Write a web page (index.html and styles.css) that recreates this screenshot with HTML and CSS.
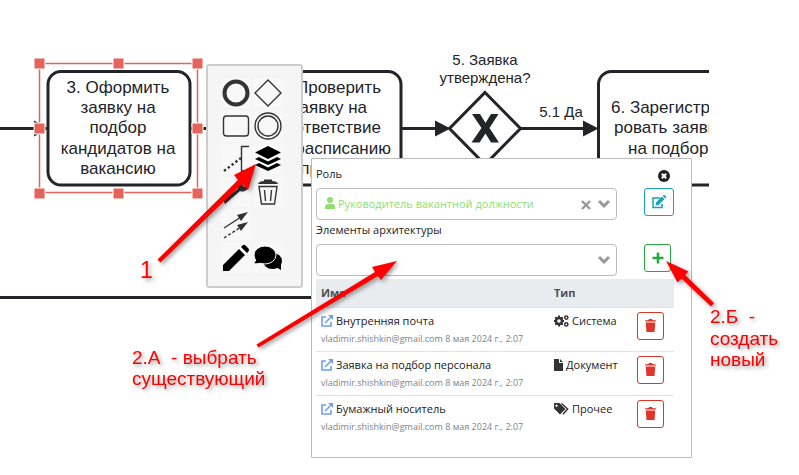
FILE: index.html
```html
<!DOCTYPE html>
<html lang="ru">
<head>
<meta charset="utf-8">
<title>Элементы архитектуры</title>
<link rel="stylesheet" href="styles.css">
</head>
<body>
<main class="canvas">
  <svg class="layer" width="709" height="475" viewBox="0 0 709 475" aria-label="Схема процесса">
    <g class="shape">
      <path d="M0 128.500H34M190 128.500H207M401 128.500H436M520 128.500H585M0 297.500H320"/>
      <rect x="48" y="71.500" width="142" height="113.500" rx="13"/>
      <rect x="259" y="71.500" width="142" height="113.500" rx="13"/>
      <rect x="598.500" y="71.500" width="142" height="113.500" rx="13"/>
      <path d="M485 92.500L520.500 128.500L485 164.500L449.500 128.500Z"/>
    </g>
    <g class="solid">
      <path d="M34 120.500L49 128.500L34 136.500ZM435 120.500L450.500 128.500L435 136.500ZM583 120.500L598.500 128.500L583 136.500Z"/>
      <path d="M472 114H480L485.500 123L491 114H498.500L489.500 128L499 142.500H491L485.500 133.500L479.500 142.500H471.500L481.500 128Z"/>
    </g>
    <g class="caption">
      <text x="118" y="93">3. Оформить</text>
      <text x="118" y="113">заявку на</text>
      <text x="118" y="133">подбор</text>
      <text x="118" y="154">кандидатов на</text>
      <text x="118" y="174">вакансию</text>
    </g>
    <g class="caption end">
      <text x="381" y="93">Проверить</text>
      <text x="367" y="113">заявку на</text>
      <text x="381" y="133">ответствие</text>
      <text x="391" y="154">расписанию</text>
      <text x="319" y="174">пр</text>
    </g>
    <g class="caption start">
      <text x="611" y="113">6. Зарегистр</text>
      <text x="614" y="133">ровать заявк</text>
      <text x="628" y="154">на подбор</text>
    </g>
    <g class="caption small">
      <text x="485" y="65">5. Заявка</text>
      <text x="485" y="83">утверждена?</text>
      <text x="561" y="117">5.1 Да</text>
    </g>
    <rect class="outline" x="39.500" y="63.500" width="158" height="129"/>
    <path class="handles" d="M34 58h11v11h-11zM113 58h11v11h-11zM192 58h11v11h-11zM34 123h11v11h-11zM192 123h11v11h-11zM34 188h11v11h-11zM113 188h11v11h-11zM192 188h11v11h-11z"/>
  </svg>

  <nav class="pad" aria-label="Инструменты">
    <button aria-label="Событие"><svg viewBox="0 0 30 30"><circle cx="15" cy="15" r="11.500" class="ln w4"/></svg></button>
    <button aria-label="Шлюз"><svg viewBox="0 0 30 30"><path d="M15 2L28 15L15 28L2 15Z" class="ln"/></svg></button>
    <button aria-label="Задача"><svg viewBox="0 0 30 30"><rect x="2.500" y="5" width="25" height="20" rx="3" class="ln"/></svg></button>
    <button aria-label="Промежуточное событие"><svg viewBox="0 0 30 30"><circle cx="15" cy="15" r="13" class="ln"/><circle cx="15" cy="15" r="10" class="ln"/></svg></button>
    <button aria-label="Комментарий"><svg viewBox="0 0 30 30"><path d="M28 2.500H20.500V27H28" class="ln"/><path d="M3 27L20 14" class="ln dots"/></svg></button>
    <button aria-label="Элементы архитектуры"><svg viewBox="0 0 30 30"><path d="M15 2L28 8.500L15 15L2 8.500ZM6 13L2 15L15 21L28 15L24 13L15 17.500ZM6 19L2 21L15 27L28 21L24 19L15 23.500Z"/></svg></button>
    <button aria-label="Тип"><svg viewBox="0 0 30 30"><path d="M2 23L17 12Q15 7 19 3.500Q21 2 24 2L21 6Q21 10 25 10L28 7Q28 12 24 14Q21 15 19 14L4 27Z" class="dark"/></svg></button>
    <button aria-label="Удалить"><svg viewBox="0 0 30 30"><path d="M5 7Q6 4 11 4V2.500H19V4Q24 4 25 7Z" class="dark"/><path d="M6 9.500H24L21.500 27H8.500ZM11.500 13L12.500 24M18.500 13L17.500 24" class="ln"/></svg></button>
    <button aria-label="Связь"><svg viewBox="0 0 30 30"><path d="M3 18L20 7" class="ln"/><path d="M3 28L20 17" class="ln" stroke-dasharray="3 2"/><path d="M27 2L20 11L16 5ZM27 12L20 21L16 15Z" class="dark"/></svg></button>
    <span></span>
    <button aria-label="Изменить"><svg viewBox="0 0 30 30"><path d="M2 22L18 6L24 12L8 28H2ZM20 4L21.500 2.500Q23 1 25 3L27 5Q29 7 27 9L26 10Z"/></svg></button>
    <button aria-label="Обсуждение"><svg viewBox="0 0 30 30"><ellipse cx="19.500" cy="18" rx="9.500" ry="8"/><path d="M23 24L28 27V20Z"/><ellipse cx="12" cy="12" rx="11" ry="9" stroke="#f5f5f5"/><path d="M1 20Q4 18 3 14L9 19Q5 21 1 20Z"/></svg></button>
  </nav>

  <section class="panel">
    <header class="bar">
      <label for="role">Роль</label>
      <button class="close" aria-label="Закрыть"><svg width="12" height="12" viewBox="0 0 12 12"><circle cx="6" cy="6" r="6" fill="#222"/><path d="M3.800 3.800L8.200 8.200M8.200 3.800L3.800 8.200" stroke="#fff" stroke-width="2"/></svg></button>
    </header>
    <div class="field">
      <div class="combo">
        <svg class="user" width="10" height="12" viewBox="0 0 10 12"><circle cx="5" cy="3" r="3"/><path d="M0 12V9.500Q0 7 3 7H7Q10 7 10 9.500V12Z"/></svg>
        <select id="role" class="filled"><option>Руководитель вакантной должности</option></select>
        <button class="clear" aria-label="Очистить"><svg width="10" height="10" viewBox="0 0 10 10"><path d="M1 1L9 9M9 1L1 9"/></svg></button>
        <svg class="chev" width="14" height="10" viewBox="0 0 14 10"><path d="M2 2L7 7L12 2"/></svg>
      </div>
      <button class="btn edit" aria-label="Изменить роль"><svg width="16" height="14" viewBox="0 0 16 14"><path d="M9 3H2V12.500H11V9" fill="none" stroke="currentColor" stroke-width="1.500"/><path d="M5 7.500L11 1.500L13.500 4L7.500 10L4.500 10.500ZM11.700 .8L12.500 0H13.500L15.200 1.700V2.600L14.300 3.400Z"/></svg></button>
    </div>
    <label class="caption-row" for="element">Элементы архитектуры</label>
    <div class="field">
      <div class="combo">
        <select id="element"><option></option></select>
        <svg class="chev" width="14" height="10" viewBox="0 0 14 10"><path d="M2 2L7 7L12 2"/></svg>
      </div>
      <button class="btn add" aria-label="Создать"><svg width="12" height="12" viewBox="0 0 12 12"><path d="M6 .500V11.500M.500 6H11.500" stroke="currentColor" stroke-width="2.600"/></svg></button>
    </div>
    <table>
      <colgroup><col class="c-name"><col class="c-type"><col></colgroup>
      <thead><tr><th>Имя</th><th>Тип</th><th></th></tr></thead>
      <tbody>
        <tr>
          <td><a href="#"><svg class="ext" width="12" height="12" viewBox="0 0 12 12"><path d="M5 2H1V11H10V7M4 8L10 2" fill="none" stroke="currentColor" stroke-width="1.600"/><path d="M7 0H12V5Z"/></svg>Внутренняя почта</a><small>vladimir.shishkin@gmail.com 8 мая 2024 г., 2:07</small></td>
          <td><span class="kind"><svg width="15" height="12" viewBox="0 0 15 12"><circle cx="5" cy="6" r="3" fill="none" stroke="#333" stroke-width="2.400"/><path d="M5 .6V2.500M5 9.500V11.400M0 6H2M8 6H10M1.300 2.300L2.700 3.700M7.300 8.300L8.700 9.700M8.700 2.300L7.300 3.700M2.700 8.300L1.300 9.700" stroke="#333" stroke-width="2"/><circle cx="12.300" cy="2.600" r="1.600" fill="none" stroke="#333" stroke-width="1.500"/><circle cx="12.300" cy="9.400" r="1.600" fill="none" stroke="#333" stroke-width="1.500"/></svg>Система</span></td>
          <td><button class="btn del" aria-label="Удалить"><svg width="11" height="13" viewBox="0 0 11 13"><path d="M0 1.500L3.500 1L4 0H7L7.500 1L11 1.500V2.500H0ZM.7 3.500H10.300L9.500 13H1.500Z"/></svg></button></td>
        </tr>
        <tr>
          <td><a href="#"><svg class="ext" width="12" height="12" viewBox="0 0 12 12"><path d="M5 2H1V11H10V7M4 8L10 2" fill="none" stroke="currentColor" stroke-width="1.600"/><path d="M7 0H12V5Z"/></svg>Заявка на подбор персонала</a><small>vladimir.shishkin@gmail.com 8 мая 2024 г., 2:07</small></td>
          <td><span class="kind"><svg width="9" height="12" viewBox="0 0 9 12"><path d="M0 0H5V4H9V12H0ZM6 0L9 3H6Z"/></svg>Документ</span></td>
          <td><button class="btn del" aria-label="Удалить"><svg width="11" height="13" viewBox="0 0 11 13"><path d="M0 1.500L3.500 1L4 0H7L7.500 1L11 1.500V2.500H0ZM.7 3.500H10.300L9.500 13H1.500Z"/></svg></button></td>
        </tr>
        <tr>
          <td><a href="#"><svg class="ext" width="12" height="12" viewBox="0 0 12 12"><path d="M5 2H1V11H10V7M4 8L10 2" fill="none" stroke="currentColor" stroke-width="1.600"/><path d="M7 0H12V5Z"/></svg>Бумажный носитель</a><small>vladimir.shishkin@gmail.com 8 мая 2024 г., 2:07</small></td>
          <td><span class="kind"><svg width="15" height="12" viewBox="0 0 15 12"><path fill-rule="evenodd" d="M0 0H5.500L11.500 6L6 11.500L0 5.500ZM2.500 1.500A1.200 1.200 0 1 0 2.600 1.500Z"/><path d="M7.500 .5L13.700 6L9 11.300" fill="none" stroke="#333" stroke-width="1.400"/></svg>Прочее</span></td>
          <td><button class="btn del" aria-label="Удалить"><svg width="11" height="13" viewBox="0 0 11 13"><path d="M0 1.500L3.500 1L4 0H7L7.500 1L11 1.500V2.500H0ZM.7 3.500H10.300L9.500 13H1.500Z"/></svg></button></td>
        </tr>
      </tbody>
    </table>
  </section>

  <svg class="layer notes" width="799" height="475" viewBox="0 0 799 475">
    <path d="M157.500 259.500L238 180L234 175L256 164L248 190L242 184L160.500 262.500Z"/>
    <path d="M256.500 344.500L375 272L372 267L397 261L381 280L378 276L258.500 347.500Z"/>
    <path d="M711 306.500L714 303L685 275L688.500 271.500L666 261L677.500 282.500L681.500 278.500Z"/>
    <text x="140" y="278" class="big">1</text>
    <text x="132" y="364">2.А&#160; - выбрать</text>
    <text x="132" y="385">существующий</text>
    <text x="710" y="323">2.Б&#160; -</text>
    <text x="710" y="345">создать</text>
    <text x="710" y="366">новый</text>
  </svg>
</main>
</body>
</html>
```
FILE: styles.css
```css
* { box-sizing: border-box; }
body { margin: 0; background: #fff; color: #222; font: 11px/16px "Open Sans", "Noto Sans", sans-serif; }
button { margin: 0; padding: 0; border: 0; background: none; font: inherit; cursor: pointer; }
svg { display: block; }

.canvas { position: relative; min-height: 100vh; overflow: hidden; }
.layer { position: absolute; top: 0; left: 0; font-family: "Liberation Sans", Arial, sans-serif; }
.shape { fill: #fff; stroke: #22242a; stroke-width: 3; }
.solid { fill: #22242a; }
.caption { fill: #22242a; font-size: 17px; text-anchor: middle; }
.caption.end { text-anchor: end; }
.caption.start { text-anchor: start; }
.caption.small { font-size: 15px; }
.outline { fill: none; stroke: #e4635b; stroke-width: 1.5; }
.handles { fill: #e4635b; stroke: #fff; stroke-width: 1; }

.pad {
  position: absolute; top: 64px; left: 206px;
  display: grid; grid-template-columns: 30px 30px; grid-auto-rows: 30px; gap: 3px 2px;
  padding: 12px 18px 13px 13px;
  background: #f5f5f5; border: 2px solid #ccc; border-radius: 3px;
}
.pad button { background: #f8f8f8; border-radius: 4px; }
.pad svg { width: 30px; height: 30px; }
.ln { fill: none; stroke: #333; stroke-width: 1.4; }
.w4 { stroke-width: 4; }
.dots { stroke-width: 2.4; stroke-dasharray: 2.4 2.4; }
.dark { fill: #333; }

.panel {
  position: absolute; top: 158px; left: 311px; width: 381px;
  padding: 6px 17px 18px 4px;
  background: #fff; border: 1px solid #bbb; border-radius: 1px;
}
.bar { display: flex; justify-content: space-between; align-items: center; height: 23px; padding-right: 4px; padding-bottom: 6px; }
.close { align-self: end; }
.field { display: flex; align-items: flex-start; gap: 27px; }
.combo { position: relative; width: 301px; }
select {
  display: block; width: 100%; height: 32px; padding: 0 50px 0 21px;
  appearance: none; background: #fff; border: 1px solid #bbb; border-radius: 4px;
  color: #8fe070; font: inherit;
}
.user { position: absolute; left: 9px; top: 9px; fill: #8fe070; }
.clear { position: absolute; right: 26px; top: 12px; }
.clear path, .chev path { fill: none; stroke: #999; stroke-width: 3; }
.clear path { stroke-width: 2.4; }
.chev { position: absolute; right: 6px; top: 11px; pointer-events: none; }
.caption-row { display: block; height: 24px; line-height: 20px; }

.btn { display: flex; align-items: center; justify-content: center; width: 27px; height: 28px; border: 1px solid currentColor; border-radius: 3px; fill: currentColor; }
.edit { width: 30px; color: #17a2b8; }
.add { color: #28a745; }
.del { color: #dc3529; }

table { width: 100%; margin-top: 3px; border-collapse: collapse; table-layout: fixed; }
.c-name { width: 233px; }
.c-type { width: 83px; }
th { height: 28px; padding: 0 5px; background: #e9ecef; color: #495057; font-weight: 700; text-align: left; }
td { height: 44px; padding: 4px 4px 0 5px; border-top: 1px solid #dee2e6; vertical-align: top; }
td a, .kind { display: flex; align-items: center; gap: 3px; height: 18px; color: #222; text-decoration: none; white-space: nowrap; }
.ext { color: #6f9fee; fill: #6f9fee; }
.kind svg { fill: #333; }
small { display: block; color: #7c848b; font-size: 9px; line-height: 18px; }

.notes { fill: #f00; font-size: 19px; pointer-events: none; filter: drop-shadow(2px 2px 2px rgba(0, 0, 0, .4)); }
.big { font-size: 23px; }
```
